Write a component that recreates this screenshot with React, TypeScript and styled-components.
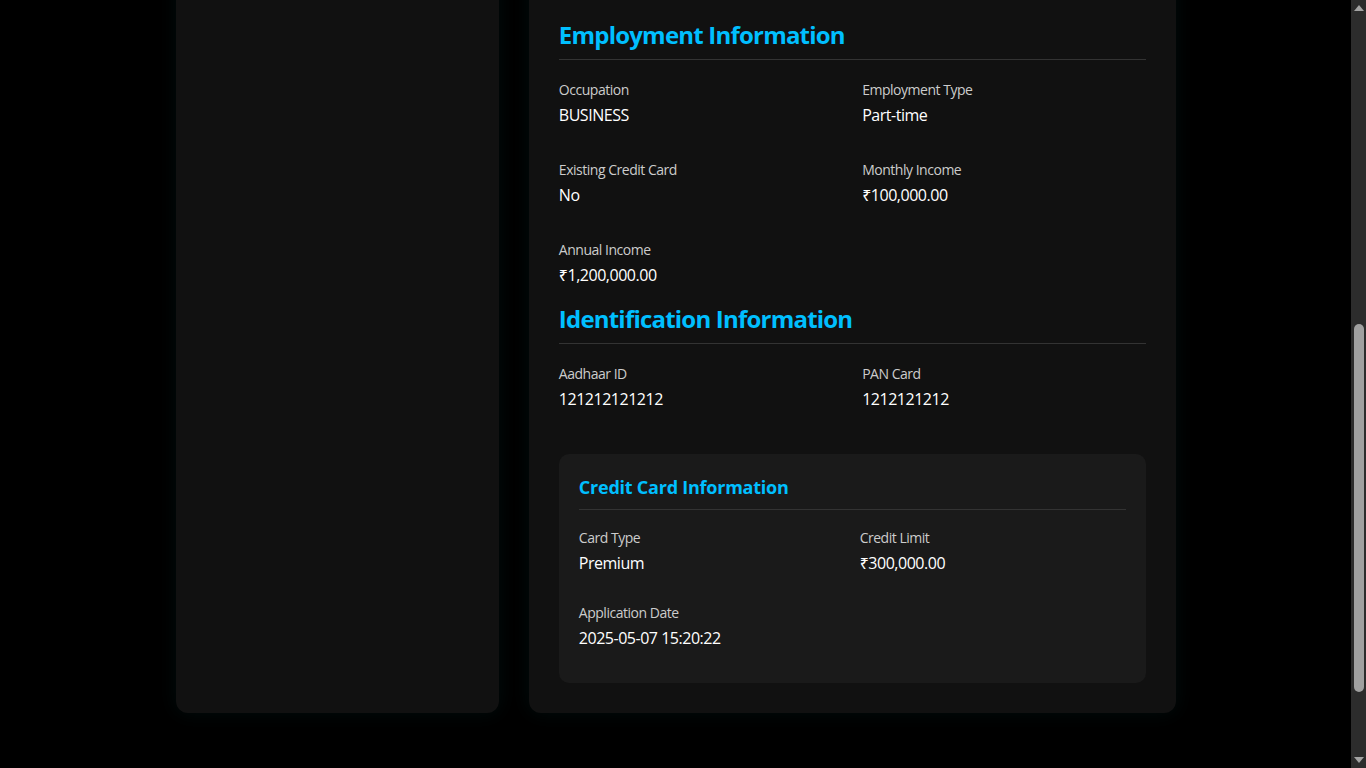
import React, { useLayoutEffect, useRef } from 'react';
import styled, { createGlobalStyle } from 'styled-components';

const Global = createGlobalStyle`
  html, body { margin: 0; padding: 0; height: 100%; overflow: hidden; background: #000; }
  body {
    font-family: "Segoe UI", "Open Sans", "Noto Sans", sans-serif;
    letter-spacing: -0.03em;
    color: #fff;
  }
  * { box-sizing: border-box; }
`;

const Shell = styled.div`
  display: flex;
  height: 100vh;
  background: #000;
`;

const Scroller = styled.div`
  flex: 1;
  min-width: 0;
  overflow: hidden;
  background: #000;
`;

const Rail = styled.div`
  width: 15px;
  flex: none;
  display: flex;
  flex-direction: column;
  background: #2c2c2c;
`;

const RailArrow = styled.div`
  height: 16px;
  flex: none;
  display: flex;
  align-items: center;
  justify-content: center;
  padding-left: 1px;
`;

const RailTrack = styled.div`
  flex: 1;
  display: flex;
  flex-direction: column;
  padding: 0 2px 0 3px;
`;

const RailThumb = styled.div`
  margin-top: 308px;
  height: 368px;
  border-radius: 5px;
  background: #a0a0a0;
`;

const Page = styled.div`
  max-width: 1000px;
  margin: 0 auto;
  padding: 40px 0 180px;
`;

const PageHeader = styled.header`
  display: flex;
  align-items: center;
  justify-content: space-between;
  margin-bottom: 30px;
`;

const PageTitle = styled.h1`
  margin: 0;
  font-size: 28px;
  line-height: 36px;
  color: #00bfff;
`;

const BackButton = styled.button`
  background: #1a1a1a;
  color: #ccc;
  border: 1px solid #333;
  border-radius: 8px;
  padding: 8px 16px;
  font: inherit;
  font-size: 14px;
`;

const Layout = styled.div`
  display: grid;
  grid-template-columns: 1fr 2fr;
  gap: 30px;
`;

const Card = styled.section`
  background: #111111;
  border-radius: 12px;
  box-shadow: 0 0 20px rgba(0, 255, 255, 0.05);
  padding: 30px;
`;

const ProfileCard = styled(Card)`
  display: flex;
  flex-direction: column;
  align-items: center;
  gap: 12px;
`;

const Avatar = styled.div`
  width: 120px;
  height: 120px;
  border-radius: 50%;
  background: #1a1a1a;
  border: 2px solid #00bfff;
  display: flex;
  align-items: center;
  justify-content: center;
  font-size: 40px;
  font-weight: 700;
  color: #00bfff;
`;

const ProfileName = styled.div`
  font-size: 20px;
  font-weight: 700;
`;

const ProfileMeta = styled.div`
  font-size: 14px;
  color: #ccc;
`;

const Section = styled.div`
  margin: 0;
`;

const SectionTitle = styled.h2`
  margin: 0 0 20px;
  padding-bottom: 7px;
  border-bottom: 1px solid #333;
  font-size: 24px;
  line-height: 35px;
  font-weight: 700;
  letter-spacing: -0.033em;
  color: #00bfff;
`;

const DetailGrid = styled.div<{ $rowGap: number; $colGap: number }>`
  display: grid;
  grid-template-columns: 1fr 1fr;
  row-gap: ${(p) => p.$rowGap}px;
  column-gap: ${(p) => p.$colGap}px;
`;

const DetailItem = styled.div`
  margin-bottom: 15px;
`;

const Label = styled.div`
  font-size: 14px;
  line-height: 19px;
  color: #cccccc;
`;

const Value = styled.div`
  margin-top: 6px;
  font-size: 16px;
  line-height: 21px;
  color: #ffffff;
`;

const CreditBox = styled.div`
  margin-top: 29px;
  background: #1a1a1a;
  border-radius: 10px;
  padding: 20px 20px 19px;
`;

const CreditTitle = styled.h3`
  margin: 0 0 18px;
  padding-bottom: 8px;
  border-bottom: 1px solid #333;
  font-size: 18px;
  line-height: 27px;
  font-weight: 700;
  letter-spacing: -0.013em;
  color: #00bfff;
`;

type Field = { label: string; value: string };

const personal: Field[] = [
  { label: 'Full Name', value: 'Applicant' },
  { label: 'Email', value: '—' },
  { label: 'Phone', value: '—' },
  { label: 'Date of Birth', value: '—' },
  { label: 'Gender', value: '—' },
  { label: 'Address', value: '—' },
];

const employment: Field[] = [
  { label: 'Occupation', value: 'BUSINESS' },
  { label: 'Employment Type', value: 'Part-time' },
  { label: 'Existing Credit Card', value: 'No' },
  { label: 'Monthly Income', value: '₹100,000.00' },
  { label: 'Annual Income', value: '₹1,200,000.00' },
];

const identification: Field[] = [
  { label: 'Aadhaar ID', value: '121212121212' },
  { label: 'PAN Card', value: '1212121212' },
];

const credit: Field[] = [
  { label: 'Card Type', value: 'Premium' },
  { label: 'Credit Limit', value: '₹300,000.00' },
  { label: 'Application Date', value: '2025-05-07 15:20:22' },
];

const Details = ({ fields, rowGap, colGap }: { fields: Field[]; rowGap: number; colGap: number }) => (
  <DetailGrid $rowGap={rowGap} $colGap={colGap}>
    {fields.map((f) => (
      <DetailItem key={f.label}>
        <Label>{f.label}</Label>
        <Value>{f.value}</Value>
      </DetailItem>
    ))}
  </DetailGrid>
);

const Arrow = ({ up }: { up?: boolean }) => (
  <svg width="10" height="6" viewBox="0 0 10 6">
    <polygon points={up ? '5,0 10,6 0,6' : '0,0 10,0 5,6'} fill="#a3a3a3" />
  </svg>
);

export default function App() {
  const scrollRef = useRef<HTMLDivElement>(null);
  const cardRef = useRef<HTMLElement>(null);

  useLayoutEffect(() => {
    const s = scrollRef.current;
    const c = cardRef.current;
    if (!s || !c) return;
    s.scrollTop = 0;
    const bottom = c.getBoundingClientRect().bottom;
    s.scrollTop = bottom - 713;
  }, []);

  return (
    <>
      <Global />
      <Shell>
        <Scroller ref={scrollRef}>
          <Page>
            <PageHeader>
              <PageTitle>Application Details</PageTitle>
              <BackButton>Back</BackButton>
            </PageHeader>
            <Layout>
              <ProfileCard>
                <Avatar>A</Avatar>
                <ProfileName>Applicant</ProfileName>
                <ProfileMeta>Credit Card Application</ProfileMeta>
              </ProfileCard>
              <Card ref={cardRef}>
                <Section>
                  <SectionTitle>Personal Information</SectionTitle>
                  <Details fields={personal} rowGap={19} colGap={20} />
                </Section>
                <Section>
                  <SectionTitle>Employment Information</SectionTitle>
                  <Details fields={employment} rowGap={19} colGap={20} />
                </Section>
                <Section>
                  <SectionTitle>Identification Information</SectionTitle>
                  <Details fields={identification} rowGap={19} colGap={20} />
                </Section>
                <CreditBox>
                  <CreditTitle>Credit Card Information</CreditTitle>
                  <Details fields={credit} rowGap={14} colGap={15} />
                </CreditBox>
              </Card>
            </Layout>
          </Page>
        </Scroller>
        <Rail>
          <RailArrow>
            <Arrow up />
          </RailArrow>
          <RailTrack>
            <RailThumb />
          </RailTrack>
          <RailArrow>
            <Arrow />
          </RailArrow>
        </Rail>
      </Shell>
    </>
  );
}
